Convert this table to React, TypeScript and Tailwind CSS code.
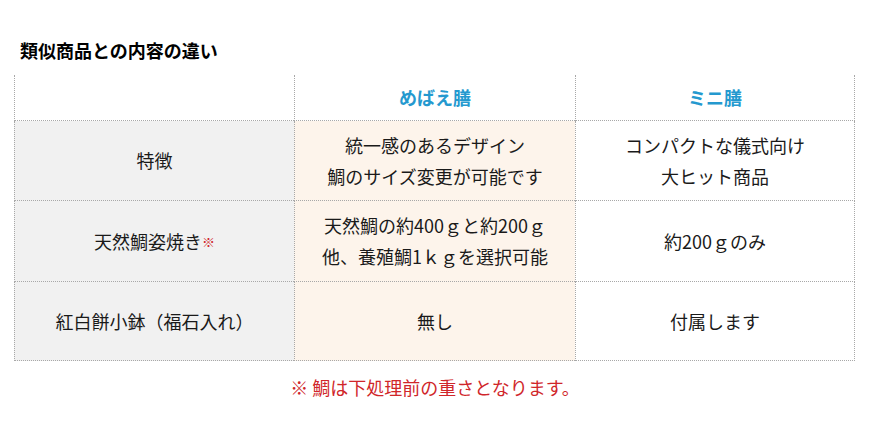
import React from 'react';

const font = { fontFamily: '"Noto Sans CJK JP", "Noto Sans", sans-serif' };

type Row = { label: React.ReactNode; mebae: React.ReactNode; mini: React.ReactNode; h: string };

const rows: Row[] = [
    {
        label: '特徴',
        mebae: (<>統一感のあるデザイン<br />鯛のサイズ変更が可能です</>),
        mini: (<>コンパクトな儀式向け<br />大ヒット商品</>),
        h: 'h-[80px]',
    },
    {
        label: (<>天然鯛姿焼き<span className="text-[13px] text-[#d0262a]">※</span></>),
        mebae: (<>天然鯛の約400ｇと約200ｇ<br />他、養殖鯛1ｋｇを選択可能</>),
        mini: '約200ｇのみ',
        h: 'h-[81px]',
    },
    {
        label: '紅白餅小鉢（福石入れ）',
        mebae: '無し',
        mini: '付属します',
        h: 'h-[79px]',
    },
];

const cell = 'flex items-center justify-center text-center border-l border-b border-dotted border-[#a8a8a8]';

export default function App() {
    return (
        <div className="w-[870px] h-[435px] bg-white text-[#1a1a1a] px-[14px] pt-[38px]" style={font}>
            <h2 className="pl-[6px] text-[18px] font-bold leading-[24px] text-black">類似商品との内容の違い</h2>

            {/* 比較テーブル */}
            <div className="mt-[13px] grid grid-cols-[280px_281px_280px] text-[18px] leading-[31px]">
                <div className={`${cell} h-[46px]`} />
                <div className={`${cell} h-[46px] font-bold text-[#2499cf]`}>めばえ膳</div>
                <div className={`${cell} h-[46px] font-bold text-[#2499cf] border-r`}>ミニ膳</div>

                {rows.map((r, i) => (
                    <React.Fragment key={i}>
                        <div className={`${cell} ${r.h} bg-[#f1f1f1]`}>{r.label}</div>
                        <div className={`${cell} ${r.h} bg-[#fdf4eb]`}>{r.mebae}</div>
                        <div className={`${cell} ${r.h} border-r`}>{r.mini}</div>
                    </React.Fragment>
                ))}
            </div>

            <p className="mt-[14px] text-center text-[18px] leading-[24px] text-[#d0262a]">※ 鯛は下処理前の重さとなります。</p>
        </div>
    );
}
